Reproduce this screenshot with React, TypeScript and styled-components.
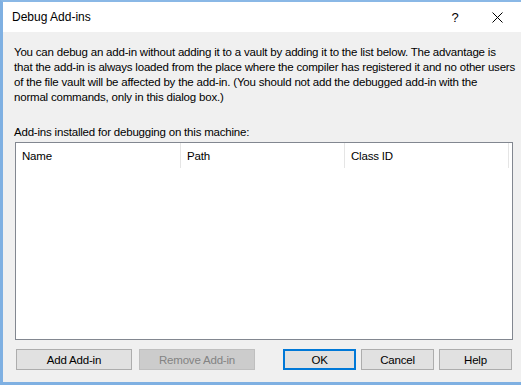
import React from "react";
import styled, { createGlobalStyle } from "styled-components";

const GlobalStyle = createGlobalStyle`
    html, body {
        margin: 0;
        padding: 0;
        background: #f0f0f0;
    }
    body {
        font-family: "Liberation Sans", Arial, sans-serif;
        font-size: 11.5px;
        letter-spacing: -0.2px;
        color: #000;
    }
`;

const Window = styled.div`
    width: 521px;
    height: 385px;
    box-sizing: border-box;
    border-top: 2px solid #8ab8e6;
    border-left: 3px solid #7fb0e2;
    border-bottom: 3px solid #7fb0e2;
    background: #f0f0f0;
    display: flex;
    flex-direction: column;
    overflow: hidden;
`;

const TitleBar = styled.div`
    height: 30px;
    flex-shrink: 0;
    background: #fff;
    display: flex;
    align-items: center;
    padding-left: 9px;
`;

const Title = styled.div`
    flex: 1;
    font-size: 12px;
    letter-spacing: 0;
`;

const CaptionButton = styled.div`
    width: 42px;
    height: 30px;
    display: flex;
    align-items: center;
    justify-content: center;
    font-size: 13px;
`;

const CaptionEdge = styled.div`
    width: 3px;
`;

const Body = styled.div`
    flex: 1;
    display: flex;
    flex-direction: column;
    padding: 13px 9px 0 11px;
`;

const Intro = styled.div`
    line-height: 15px;
`;

const Line = styled.div`
    white-space: nowrap;
`;

const Label = styled.div`
    margin-top: 20px;
    line-height: 15px;
`;

const ListBox = styled.div`
    margin: 2px 0 0 1px;
    width: 498px;
    height: 198px;
    box-sizing: border-box;
    border: 1px solid #828790;
    background: #fff;
`;

const Header = styled.div`
    display: flex;
    height: 25px;
`;

const HeaderCell = styled.div<{ $w: number }>`
    width: ${p => p.$w}px;
    box-sizing: border-box;
    border-right: 1px solid #e5e5e5;
    padding-left: 6px;
    display: flex;
    align-items: center;
`;

const ButtonRow = styled.div`
    display: flex;
    margin-top: 9px;
    padding-left: 2px;
`;

const Group = styled.div<{ $gap: number }>`
    display: flex;
    gap: ${p => p.$gap}px;
`;

const Spacer = styled.div`
    width: 28px;
`;

const Button = styled.div<{ $w: number; $default?: boolean; $disabled?: boolean }>`
    width: ${p => p.$w}px;
    height: 21px;
    box-sizing: border-box;
    display: flex;
    align-items: center;
    justify-content: center;
    background: ${p => (p.$disabled ? "#cccccc" : "#e1e1e1")};
    border: ${p => (p.$default ? "2px solid #0078d7" : p.$disabled ? "1px solid #bfbfbf" : "1px solid #adadad")};
    color: ${p => (p.$disabled ? "#838383" : "#000")};
`;

const CloseIcon = () => (
    <svg width="11" height="11" viewBox="0 0 11 11">
        <path d="M0.5 0.5 L10.5 10.5 M10.5 0.5 L0.5 10.5" stroke="#000" strokeWidth="1" fill="none" />
    </svg>
);

export default function App() {
    return (
        <>
            <GlobalStyle />
            <Window>
                <TitleBar>
                    <Title>Debug Add-ins</Title>
                    <CaptionButton>?</CaptionButton>
                    <CaptionButton>
                        <CloseIcon />
                    </CaptionButton>
                    <CaptionEdge />
                </TitleBar>
                <Body>
                    <Intro>
                        <Line>You can debug an add-in without adding it to a vault by adding it to the list below. The advantage is</Line>
                        <Line>that the add-in is always loaded from the place where the compiler has registered it and no other users</Line>
                        <Line>of the file vault will be affected by the add-in. (You should not add the debugged add-in with the</Line>
                        <Line>normal commands, only in this dialog box.)</Line>
                    </Intro>
                    <Label>Add-ins installed for debugging on this machine:</Label>
                    <ListBox>
                        <Header>
                            <HeaderCell $w={165}>Name</HeaderCell>
                            <HeaderCell $w={164}>Path</HeaderCell>
                            <HeaderCell $w={164}>Class ID</HeaderCell>
                        </Header>
                    </ListBox>
                    <ButtonRow>
                        <Group $gap={7}>
                            <Button $w={116}>Add Add-in</Button>
                            <Button $w={116} $disabled>Remove Add-in</Button>
                        </Group>
                        <Spacer />
                        <Group $gap={5}>
                            <Button $w={73} $default>OK</Button>
                            <Button $w={73}>Cancel</Button>
                            <Button $w={73}>Help</Button>
                        </Group>
                    </ButtonRow>
                </Body>
            </Window>
        </>
    );
}
